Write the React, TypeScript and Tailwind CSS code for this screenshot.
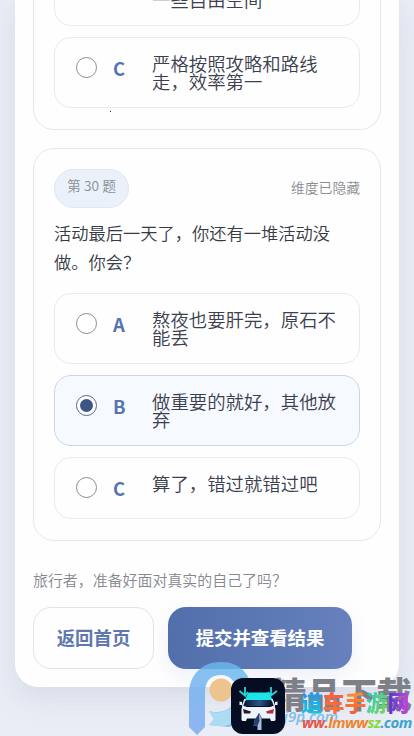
import clsx from "clsx";

type OptionProps = {
  letter: string;
  lines: string[];
  checked?: boolean;
};

const question = {
  tag: "第 30 题",
  title: ["活动最后一天了，你还有一堆活动没", "做。你会？"],
  options: [
    { letter: "A", lines: ["熬夜也要肝完，原石不", "能丢"] },
    { letter: "B", lines: ["做重要的就好，其他放", "弃"], checked: true },
    { letter: "C", lines: ["算了，错过就错过吧"] },
  ],
};

function Option({ letter, lines, checked = false }: OptionProps) {
  return (
    <label
      className={clsx(
        "flex shrink-0 items-start rounded-[17px] border pl-[21px]",
        lines.length > 1 ? "h-[71px]" : "h-[62px]",
        checked ? "border-[#ccd5e8] bg-[#f6faff]" : "border-[#e8eaed] bg-[#fefefe]",
      )}
    >
      <span
        className={clsx(
          "mt-[19px] flex size-[21px] shrink-0 items-center justify-center rounded-full border-[1.5px] bg-white",
          checked ? "border-[#56658c]" : "border-[#8b8b8d]",
        )}
      >
        {checked && <span className="size-[13px] rounded-full bg-[#3e5487]" />}
      </span>
      <span className="mt-[17px] ml-[16px] w-[39px] shrink-0 text-[18.4px] leading-[27px] font-bold text-[#5574b0]">
        {letter}
      </span>
      <span className="mt-[16px] text-[18.4px] leading-[18.4px] font-[350] whitespace-nowrap text-[#3b404f]">
        {lines.map((line) => (
          <span key={line} className="block">{line}</span>
        ))}
      </span>
    </label>
  );
}

function SiteMarks() {
  return (
    <div className="pointer-events-none absolute right-0 bottom-0 h-[86px] w-[234px]">
      <svg className="absolute top-0 left-0" width="234" height="86" viewBox="0 0 234 86" fill="none">
        <defs>
          <linearGradient id="ribbon" x1="10" y1="70" x2="60" y2="12" gradientUnits="userSpaceOnUse">
            <stop stopColor="#78a9f1" />
            <stop offset="1" stopColor="#67bced" />
          </linearGradient>
        </defs>
        <path
          d="M9 44C9 25 22 12 41 12C60 12 72 25 72 43C72 61 62 72 49 77L29 75L34 69L29 61C38 64 57 61 57 43C57 32 50 25 41 25C30 25 25 32 25 42V77L17 85L9 77Z"
          fill="url(#ribbon)"
          opacity=".82"
        />
        <path d="M29 61C38 65 49 60 57 54V71C48 77 39 77 29 75L34 69Z" fill="#abdcf2" />
        <circle cx="41" cy="40" r="11.5" fill="#ecc58e" />
      </svg>
      <span className="absolute top-[22px] left-[91px] text-[35.4px] leading-[42px] font-black tracking-[-0.2px] whitespace-nowrap text-[#7e8088]">
        精品下载
      </span>
      <span className="absolute top-[56px] left-[66px] font-['Open_Sans',sans-serif] text-[15px] leading-[20px] font-semibold italic text-[#80bce9]">
        www.j9p.com
      </span>
      <svg className="absolute top-[28px] left-[51px]" width="54" height="57" viewBox="0 0 54 57" fill="none">
        <defs>
          <linearGradient id="glass" x1="14" y1="24" x2="40" y2="27" gradientUnits="userSpaceOnUse">
            <stop stopColor="#071b3e" />
            <stop offset=".55" stopColor="#2c5488" />
            <stop offset="1" stopColor="#09152c" />
          </linearGradient>
        </defs>
        <rect width="54" height="56" rx="12" fill="#050d22" />
        <path d="M18 14.5H37L39 16L42 23H13.5L16.5 16Z" fill="#1ce5e8" />
        <path d="M15 22H40L42.5 28H12.5Z" fill="url(#glass)" />
        <path d="M14 21L11.5 28M41 21L43.5 28" stroke="#dceafa" strokeWidth="1.5" />
        <path
          d="M11.5 27.5L16 29H39L43.5 27.5L44.5 31V42L43.5 43H40L39 40.5H31L28 35L25 40.5H16L15 43H11.5L10.5 42V31Z"
          fill="#edf4fc"
        />
        <path d="M12 31L20 33.5L19 35.5H13Z" fill="#28182c" />
        <path d="M43 31L35 33.5L36 35.5H42Z" fill="#b72a38" />
        <path d="M28 36L30.5 40V52H26.5V47.5H22.5L24 41Z" fill="#a9bcde" />
        <path d="M28 36L28.5 43L26.5 47.5H22.5L24 41Z" fill="#26416f" />
        <path d="M8.5 23.5L11 24V27H8.5ZM44 24L46.5 23.5V27H44Z" fill="#e7f3fb" />
        <path d="M14 9V17.5L8.5 13M14 17.5L17 14M40 9V17.5L46 13M40 17.5L37 14" stroke="#27d4db" strokeWidth="1.8" />
      </svg>
      <span className="absolute top-[39px] left-[121px] flex text-[21.7px] leading-[26px] font-black whitespace-nowrap">
        <span className="bg-linear-to-b from-[#268ce8] to-[#16c9e2] bg-clip-text text-transparent">道</span>
        <span className="bg-linear-to-b from-[#f35b44] to-[#ff7433] bg-clip-text text-transparent">车</span>
        <span className="bg-linear-to-b from-[#ff9632] to-[#f05c32] bg-clip-text text-transparent">手</span>
        <span className="bg-linear-to-br from-[#25c3c4] to-[#74dc3e] bg-clip-text text-transparent">游</span>
        <span className="bg-linear-to-r from-[#5131d2] to-[#d53ae1] bg-clip-text text-transparent">网</span>
      </span>
      <span className="absolute top-[62px] left-[122px] font-['Open_Sans',sans-serif] text-[15px] leading-[20px] font-bold tracking-[-0.6px] italic whitespace-nowrap">
        <span className="text-[#ea5545]">ww.</span>
        <span className="text-[#ee8430]">lmww</span>
        <span className="text-[#89d843]">sz</span>
        <span className="text-[#3fa2d1]">.com</span>
      </span>
    </div>
  );
}

export default function App() {
  return (
    <div className="relative h-[736px] w-[414px] overflow-hidden bg-[#e9edf6] px-[15px] font-['Noto_Sans_CJK_SC',sans-serif]">
      <main className="flex h-[687px] flex-col rounded-b-[23px] bg-[#fefefe] px-[18px] shadow-[0_10px_28px_#a9a9bd40]">
        <section className="relative flex h-[130px] shrink-0 flex-col justify-end gap-[11px] rounded-b-[21px] border border-t-0 border-[#e5e8eb] px-[20px] pb-[21px]">
          <Option letter="B" lines={["适当参考攻略，留出", "一些自由空间"]} />
          <Option letter="C" lines={["严格按照攻略和路线", "走，效率第一"]} />
          <span className="absolute top-[111px] left-[76px] size-px bg-[#333]" />
        </section>

        <section className="mt-[18px] h-[393px] shrink-0 rounded-[21px] border border-[#e5e8eb] px-[20px] pt-[20px]">
          <header className="flex h-[39px] items-start justify-between">
            <span className="flex h-[39px] w-[75px] justify-center rounded-full border border-[#e1e7ef] bg-[#ebf1fa] pt-[4px] text-[13.8px] leading-[23px] font-[350] text-[#8a8e96]">
              {question.tag}
            </span>
            <span className="mt-[8px] text-[13.8px] leading-[20px] font-[350] text-[#8a8d93]">维度已隐藏</span>
          </header>
          <h2 className="mt-[10px] text-[17.25px] leading-[29.3px] font-[350] whitespace-nowrap text-[#373b44]">
            {question.title.map((line) => (
              <span key={line} className="block">{line}</span>
            ))}
          </h2>
          <div className="mt-[16px] flex flex-col gap-[11px]">
            {question.options.map((option) => (
              <Option key={option.letter} {...option} />
            ))}
          </div>
        </section>

        <p className="mt-[28px] text-[14.95px] leading-[22px] font-[350] text-[#85888e]">
          旅行者，准备好面对真实的自己了吗？
        </p>

        <div className="mt-[16px] flex gap-[14px]">
          <button className="h-[62px] w-[121px] rounded-[18px] border border-[#dfe4ef] bg-[#fefefe] text-[18.4px] font-bold text-[#5f77af]">
            返回首页
          </button>
          <button className="h-[62px] w-[184px] rounded-[18px] bg-linear-to-r from-[#526fab] to-[#6681bd] text-[18.4px] font-bold text-white shadow-[0_8px_20px_#6681bd1c]">
            提交并查看结果
          </button>
        </div>
      </main>
      <SiteMarks />
    </div>
  );
}
